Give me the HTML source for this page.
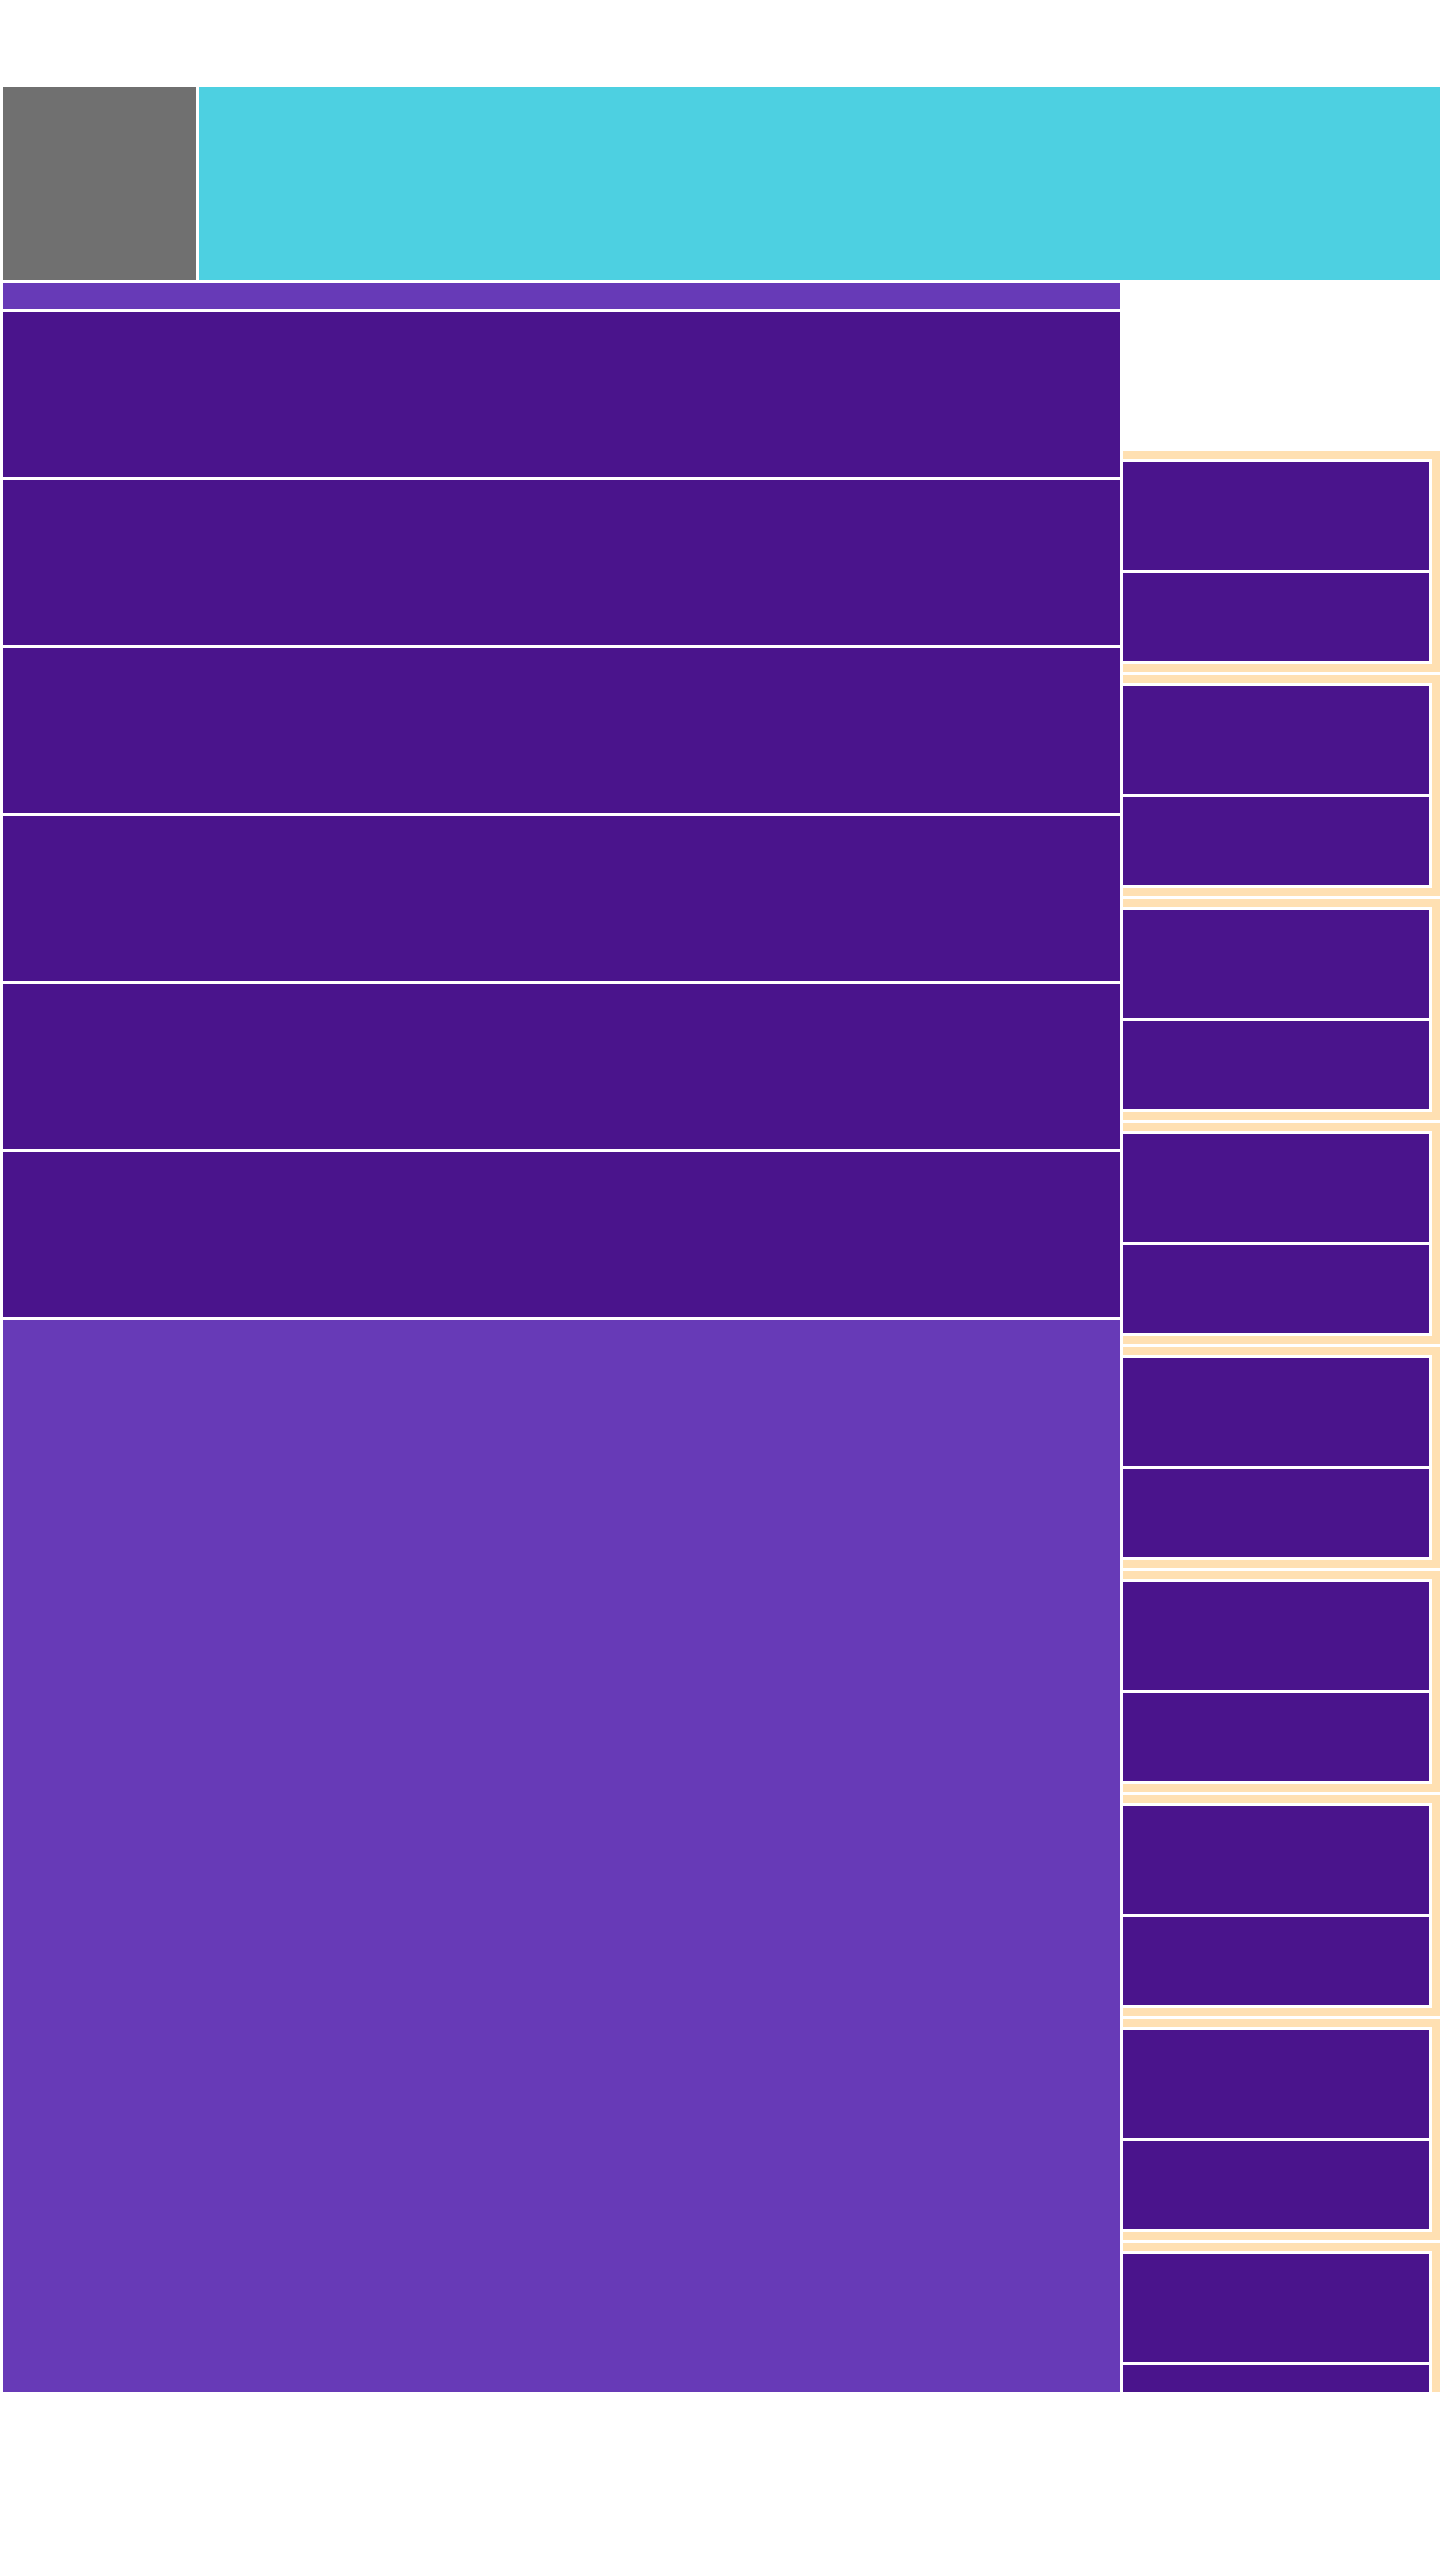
<!DOCTYPE html>
<html><head><meta charset="utf-8"><style>
*{margin:0;padding:0;box-sizing:border-box}
body{width:1440px;height:2560px;background:#fff;position:relative;overflow:hidden;font-family:"Liberation Sans",sans-serif}
div{position:absolute}
.d{background:#4a148c}
.l{background:#673ab7}
.c{background:#ffe0b2;left:1123px;width:317px;height:221px;overflow:hidden}
.w{background:#fff;left:0;top:8px;width:309px;height:205px}
.p1{background:#4a148c;left:0;top:3px;width:306px;height:108px}
.p2{background:#4a148c;left:0;top:114px;width:306px;height:88px}
</style></head><body>
<div style="left:3px;top:87px;width:193px;height:193px;background:#707070"></div>
<div style="left:199px;top:87px;width:1241px;height:193px;background:#4dd0e1"></div>
<div class="l" style="left:3px;top:283px;width:1117px;height:26px"></div>
<div class="d" style="left:3px;top:312px;width:1117px;height:165px"></div>
<div class="d" style="left:3px;top:480px;width:1117px;height:165px"></div>
<div class="d" style="left:3px;top:648px;width:1117px;height:165px"></div>
<div class="d" style="left:3px;top:816px;width:1117px;height:165px"></div>
<div class="d" style="left:3px;top:984px;width:1117px;height:165px"></div>
<div class="d" style="left:3px;top:1152px;width:1117px;height:165px"></div>
<div class="l" style="left:3px;top:1320px;width:1117px;height:1072px"></div>
<div class="c" style="top:451px"><div class="w"><div class="p1"></div><div class="p2"></div></div></div>
<div class="c" style="top:675px"><div class="w"><div class="p1"></div><div class="p2"></div></div></div>
<div class="c" style="top:899px"><div class="w"><div class="p1"></div><div class="p2"></div></div></div>
<div class="c" style="top:1123px"><div class="w"><div class="p1"></div><div class="p2"></div></div></div>
<div class="c" style="top:1347px"><div class="w"><div class="p1"></div><div class="p2"></div></div></div>
<div class="c" style="top:1571px"><div class="w"><div class="p1"></div><div class="p2"></div></div></div>
<div class="c" style="top:1795px"><div class="w"><div class="p1"></div><div class="p2"></div></div></div>
<div class="c" style="top:2019px"><div class="w"><div class="p1"></div><div class="p2"></div></div></div>
<div class="c" style="top:2243px;height:149px"><div class="w"><div class="p1"></div><div class="p2"></div></div></div>
</body></html>
